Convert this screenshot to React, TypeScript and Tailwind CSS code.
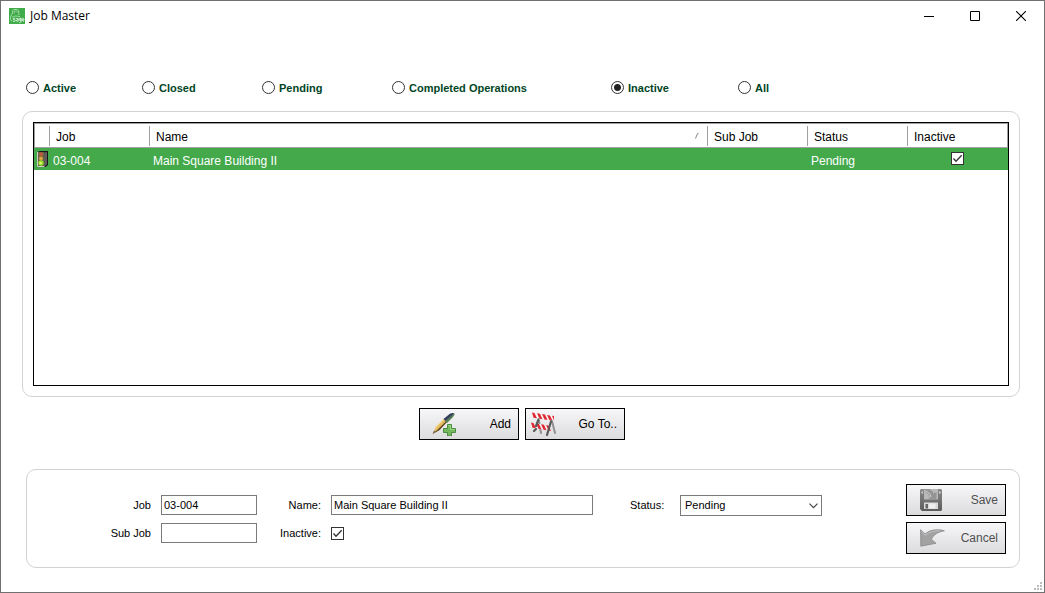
import React, { useState } from "react";

const filters = ["Active", "Closed", "Pending", "Completed Operations", "Inactive", "All"];

const CHECK =
  "relative block size-[13px] shrink-0 appearance-none border border-[#333] bg-white";

function CheckBox({ id, label, checked, onChange }: { id?: string; label?: string; checked: boolean; onChange: () => void }) {
  return (
    <span className="relative block size-[13px]">
      <input id={id} type="checkbox" aria-label={label} checked={checked} onChange={onChange} className={CHECK} />
      {checked && (
        <svg viewBox="0 0 13 13" className="pointer-events-none absolute inset-0 size-[13px]" fill="none" stroke="#333" strokeWidth="1.3">
          <path d="M2.5 6.5 5 9.2 10.7 3.2" />
        </svg>
      )}
    </span>
  );
}

function AppIcon() {
  return (
    <svg viewBox="0 0 16 16" className="size-4">
      <rect width="16" height="16" fill="#3fab49" />
      <g fill="none" stroke="#a9dfad" strokeWidth="0.9">
        <path d="M3.5 6V3.8C3.5 2.2 4.5 1.5 6 1.5h1.5C9 1.5 9.8 2.5 9.8 4v3" />
        <path d="M5.2 5.5V4.2C5.2 3.4 5.6 3 6.4 3h.8c.8 0 1.2.5 1.2 1.3" />
        <path d="M3.5 5.5C2 7 1.3 9 1.5 11.5c.1 1 .8 1.5 2 1.5M3 9.3C5 7.8 8 7.600 11 8.8" />
      </g>
      <g fill="none" stroke="#e4f7e5" strokeWidth="0.9">
        <path d="M6.3 10.3H5c-1.1 0-1.1 1.5 0 1.5h.5c1.1 0 1.1 1.5 0 1.5H4M7.3 10.5h1.8v2.8H8.3c-1.2 0-1.2-1.5 0-1.5h.8M12 10.3h-.8c-1.2 0-1.2 2.2 0 2.2h.8v-2.2 3c0 1.2-1 1.5-1.8 1.2M13.3 12h1.7c0-1.3-.4-1.7-.9-1.7-1.2 0-1.2 2.900.1 2.900h.8" />
      </g>
    </svg>
  );
}

function TrafficLight() {
  return (
    <svg viewBox="0 0 11 16" className="h-4 w-[11px]">
      <path d="M0 1 3 0h8v14l-2.500 2H0z" fill="#161616" />
      <path d="M7.500 1.500 10 1v12.500l-2.500 1.500z" fill="#a29e96" />
      <path d="M9 1v13.500" stroke="#1d1d1d" strokeWidth="1" />
      <path d="M1 1h6v14H1z" fill="#6b6248" />
      <circle cx="4" cy="3.200" r="1.900" fill="#c4573a" />
      <circle cx="4" cy="7.500" r="1.900" fill="#d9a73a" />
      <circle cx="4" cy="12" r="2.700" fill="#93dc2b" />
      <circle cx="3.600" cy="12" r="1.200" fill="#d8ff6b" />
      <path d="M.5 1v14.500h7" fill="none" stroke="#e2e2da" strokeWidth=".9" />
    </svg>
  );
}

function PenIcon() {
  return (
    <svg viewBox="0 0 26 24" className="h-6 w-[26px]">
      <defs>
        <linearGradient id="pen" x1="0" y1="0" x2="1" y2="1">
          <stop offset="0.400" stopColor="#f4cf72" />
          <stop offset="0.800" stopColor="#9b6a1d" />
        </linearGradient>
      </defs>
      <path d="M1.500 22 5 14.500 13 6.700l3 3L8.500 18z" fill="url(#pen)" />
      <path d="M1.500 22 8.500 18 16 10l-.8-.8L7.500 17z" fill="#574221" />
      <path d="m12.500 7 6-5C20.300.800 22 .600 23.500 1.500L15 9.500z" fill="#34425e" />
      <path d="m16 11 6-6c1.200-1.200 1.700-2.300 1.500-3.500L14 9.300z" fill="#598052" />
      <path d="m1.500 22 1.700-3.500 1.600 1.500z" fill="#6f6959" />
      <path d="M16.500 12.500h4v4h4v4h-4v3.500h-4v-3.500h-4v-4h4z" fill="#75b85d" stroke="#3f8638" strokeWidth=".9" />
      <path d="M17.500 13.500h2v4h4" fill="none" stroke="#a7dc92" strokeWidth=".8" />
    </svg>
  );
}

function BarrierIcon() {
  return (
    <svg viewBox="0 0 25 25" className="size-[25px]">
      <path d="M1 .5 23 4v5L1 5.500z" fill="#fbf5f5" />
      <path d="M1 .5l2.500.4L6 6.300 2.500 5.700zM6 1.300l3 .5 2.500 5.400-3-.5zM11 2.100l3 .5L16.500 8l-3-.5zM16 2.900l3 .5 2.500 5.400-3-.5zM21 3.700l2 .3v4.500z" fill="#dc2933" />
      <g stroke="#909090" strokeWidth="2" strokeLinecap="round">
        <path d="M8 9l2 12M21 9l3 12" />
      </g>
      <path d="M0 10.500 20 14v5L0 15.500z" fill="#fbf5f5" />
      <path d="M0 10.500l2.500.4L5 16.300l-3.500-.6zM5 11.400l3 .5 2.500 5.400-3-.5zM10 12.200l3 .6 2.500 5.400-3-.5zM15 13.100l3 .6 2 5.300-2.500-.4z" fill="#dc2933" />
      <g stroke="#5a5a5a" strokeWidth="2.200" strokeLinecap="round">
        <path d="M7.500 7.500 5 14M5 17l-2 2M20 9.500 16 23" />
      </g>
    </svg>
  );
}

function SaveIcon() {
  return (
    <svg viewBox="0 0 22 22" className="size-[22px]">
      <defs>
        <linearGradient id="disk" x1="0" y1="0" x2="0" y2="1">
          <stop offset="0" stopColor="#898989" />
          <stop offset="1" stopColor="#5c5c5c" />
        </linearGradient>
      </defs>
      <path d="M1 0h20l1 1v20l-1 1H2l-2-2V1z" fill="url(#disk)" />
      <path d="M4 0h14v10.500H4z" fill="#b9b9b9" />
      <path d="M3.500 0H9c2.500 1 4 2.500 4.500 4.500L16.500 3v8H7l3-2.600C9 5.500 7 3.500 3.500 2z" fill="#959595" />
      <path d="M4 1.500c4 1 6.500 3.300 7 6.700" fill="none" stroke="#e1e1e1" strokeWidth=".8" />
      <path d="M1.500 2.500H3v2H1.500zM19 2.500h1.500v2H19z" fill="#d5d5d5" />
      <path d="M4 13.500h14V20H4z" fill="#d8d8d8" />
      <path d="M5.500 15H8v4.500H5.500z" fill="#666" />
      <path d="M9 14.500h6.500v5H9z" fill="#eee" />
    </svg>
  );
}

function UndoIcon() {
  return (
    <svg viewBox="0 0 25 18" className="h-[18px] w-[25px]">
      <path
        d="M.6.700 5 5C9.500 1 17-.5 24.400 1.800 18 2.800 13 6 11.500 10.500L16 14.300.800 17.200z"
        fill="#a2a2a2"
        stroke="#888"
        strokeWidth=".8"
      />
      <path d="M1.500 2.500 5 6.200C9.500 3 15 1.300 20 1.800" fill="none" stroke="#c9c9c9" strokeWidth=".8" />
    </svg>
  );
}

function ActionButton({ icon, children, muted }: { icon: React.ReactNode; children: string; muted?: boolean }) {
  return (
    <button
      type="button"
      className={`flex h-8 w-[100px] shrink-0 items-center justify-between border border-black bg-linear-to-b from-[#f7f7fa] to-[#dcdcde] pr-[7px] text-[12px] ${
        muted ? "pl-[13px] text-[#505050]" : "pl-[5px] text-black"
      }`}
    >
      {icon}
      <span>{children}</span>
    </button>
  );
}

const TH = "h-[25px] border-t border-b border-[#a0a0a0] p-0 text-left font-normal";
const HEAD = "flex h-5 items-center border-r border-[#a0a0a0] pt-0.5 pl-1.5";
const FIELD = "h-5 border border-[#7a7a7a] bg-white px-0.5 outline-none";
const FIELDS = "grid grid-rows-[20px_20px] content-start items-center gap-x-2.5 gap-y-2";

export default function App() {
  const [filter, setFilter] = useState("Inactive");
  const [rowInactive, setRowInactive] = useState(true);
  const [inactive, setInactive] = useState(true);

  return (
    <div className="relative flex min-h-screen flex-col border border-[#707070] bg-white font-['Liberation_Sans',Arial,sans-serif] text-[12px] text-black">
      <header className="flex h-[30px] shrink-0 items-center pl-2">
        <AppIcon />
        <h1 className="ml-[5px] flex-1 font-['Open_Sans','Noto_Sans',sans-serif] text-[12px]">Job Master</h1>
        <button type="button" aria-label="Minimize" className="flex h-full w-[46px] items-center justify-center">
          <svg viewBox="0 0 10 10" className="size-2.5" shapeRendering="crispEdges"><path d="M0 5h10v1H0z" /></svg>
        </button>
        <button type="button" aria-label="Maximize" className="flex h-full w-[46px] items-center justify-center">
          <svg viewBox="0 0 10 10" className="size-2.5" fill="none" stroke="#000"><path d="M.5.500h9v9h-9z" /></svg>
        </button>
        <button type="button" aria-label="Close" className="flex h-full w-[46px] items-center justify-center">
          <svg viewBox="0 0 10 10" className="size-2.5" fill="none" stroke="#000" strokeWidth="1.100"><path d="m0 0 10 10M10 0 0 10" /></svg>
        </button>
      </header>

      <main className="flex flex-1 flex-col pt-12 pr-6 pb-6 pl-[21px]">
        <fieldset className="grid h-[18px] grid-cols-[116px_120px_130px_219px_127px_auto] items-center pl-1 text-[11px] font-bold text-[#00451f]">
          {filters.map((name) => (
            <label key={name} className="flex items-center gap-1">
              <input
                type="radio"
                name="filter"
                checked={filter === name}
                onChange={() => setFilter(name)}
                className="size-[13px] appearance-none rounded-full border border-[#333] bg-white checked:bg-[radial-gradient(circle,#222_3px,#fff_4px)]"
              />
              <span className="pt-px">{name}</span>
            </label>
          ))}
        </fieldset>

        <section className="mt-3.5 flex flex-1 flex-col rounded-[10px] border border-[#d3d3d3] p-2.5">
          <div className="flex-1 border border-black">
            <table className="w-full table-fixed border-separate border-spacing-0 text-[12px]">
              <colgroup>
                <col className="w-4" />
                <col className="w-[100px]" />
                <col />
                <col className="w-[100px]" />
                <col className="w-[100px]" />
                <col className="w-[100px]" />
              </colgroup>
              <thead>
                <tr>
                  <th className={`${TH} border-l`}><div className={HEAD} /></th>
                  <th className={TH}><div className={HEAD}>Job</div></th>
                  <th className={TH}>
                    <div className={HEAD}>
                      <span className="flex-1">Name</span>
                      <svg viewBox="0 0 5 7" className="mr-2 h-[7px] w-[5px]" fill="none" stroke="#888"><path d="M4.500.500h-1L1.500 5.500" /></svg>
                    </div>
                  </th>
                  <th className={TH}><div className={HEAD}>Sub Job</div></th>
                  <th className={TH}><div className={HEAD}>Status</div></th>
                  <th className={`${TH} border-r`}><div className="pt-0.5 pl-1.5">Inactive</div></th>
                </tr>
              </thead>
              <tbody>
                <tr className="h-[22px] bg-[#43a94b] text-white">
                  <td className="p-0 pl-[3px]"><TrafficLight /></td>
                  <td className="p-0 pt-1 pl-[3px]">03-004</td>
                  <td className="p-0 pt-1 pl-[3px]">Main Square Building II</td>
                  <td className="p-0" />
                  <td className="p-0 pt-1 pl-[3px]">Pending</td>
                  <td className="p-0 pr-0.5 pb-0.5">
                    <div className="flex justify-center">
                      <CheckBox label="Inactive" checked={rowInactive} onChange={() => setRowInactive(!rowInactive)} />
                    </div>
                  </td>
                </tr>
              </tbody>
            </table>
          </div>
        </section>

        <div className="mt-[11px] flex justify-center gap-1.5 pl-0.5">
          <ActionButton icon={<span className="pl-1.5"><PenIcon /></span>}>Add</ActionButton>
          <ActionButton icon={<BarrierIcon />}>Go To..</ActionButton>
        </div>

        <form className="mt-[29px] ml-1 flex h-[99px] justify-between rounded-[10px] border border-[#d3d3d3] py-3.5 pr-[13px] pl-[82px] text-[11px]">
          <div className="flex pt-[11px]">
            <div className={`${FIELDS} grid-cols-[42px_96px]`}>
              <label htmlFor="job" className="text-right">Job</label>
              <input id="job" className={FIELD} defaultValue="03-004" />
              <label htmlFor="subjob" className="text-right whitespace-nowrap">Sub Job</label>
              <input id="subjob" className={FIELD} />
            </div>
            <div className={`${FIELDS} ml-5 grid-cols-[44px_262px]`}>
              <label htmlFor="name" className="text-right">Name:</label>
              <input id="name" className={FIELD} defaultValue="Main Square Building II" />
              <label htmlFor="inactive" className="text-right">Inactive:</label>
              <CheckBox id="inactive" checked={inactive} onChange={() => setInactive(!inactive)} />
            </div>
            <div className="ml-[37px] flex h-5 items-center">
              <label htmlFor="status" className="w-[50px]">Status:</label>
              <span className="relative block">
                <select id="status" defaultValue="Pending" className="block h-[21px] w-[142px] appearance-none border border-[#7a7a7a] bg-white px-1 outline-none">
                  <option>Active</option>
                  <option>Closed</option>
                  <option>Pending</option>
                </select>
                <svg viewBox="0 0 9 6" className="pointer-events-none absolute top-2 right-1 h-1.5 w-[9px]" fill="none" stroke="#444" strokeWidth="1.200"><path d="M.5.700 4.500 4.700 8.500.700" /></svg>
              </span>
            </div>
          </div>
          <div className="flex flex-col gap-1.5">
            <ActionButton muted icon={<SaveIcon />}>Save</ActionButton>
            <ActionButton muted icon={<UndoIcon />}>Cancel</ActionButton>
          </div>
        </form>
      </main>
      <svg viewBox="0 0 11 11" className="absolute right-0 bottom-0 size-[11px]" fill="#bdbdbd" shapeRendering="crispEdges">
        <path d="M7 1h2v2H7zM4 4h2v2H4zM7 4h2v2H7zM1 7h2v2H1zM4 7h2v2H4zM7 7h2v2H7z" />
      </svg>
    </div>
  );
}
